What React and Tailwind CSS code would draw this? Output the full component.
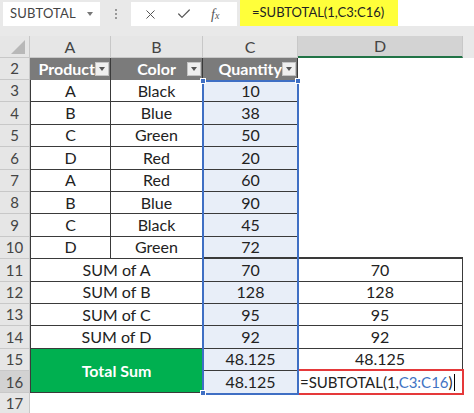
import { X, Check } from 'lucide-react'

const body = [
  ['3', 'A', 'Black', '10'],
  ['4', 'B', 'Blue', '38'],
  ['5', 'C', 'Green', '50'],
  ['6', 'D', 'Red', '20'],
  ['7', 'A', 'Red', '60'],
  ['8', 'B', 'Blue', '90'],
  ['9', 'C', 'Black', '45'],
  ['10', 'D', 'Green', '72'],
]

const sums = [
  ['11', 'SUM of A', '70'],
  ['12', 'SUM of B', '128'],
  ['13', 'SUM of C', '95'],
  ['14', 'SUM of D', '92'],
]

function RowHead({ n, active }) {
  return (
    <div className={`flex items-center justify-center border-r border-b border-[#c8c8c8] text-[15px] text-[#444] ${active ? 'bg-[#d2d2d2]' : 'bg-[#e6e6e6]'}`}>
      {n}
    </div>
  )
}

function Drop() {
  return (
    <span className="absolute right-[1px] top-[4px] w-[14px] h-[14px] bg-[#efefef] border border-[#c4c4c4] flex items-center justify-center">
      <span className="w-0 h-0 border-l-[3px] border-r-[3px] border-t-[4px] border-l-transparent border-r-transparent border-t-[#555]" />
    </span>
  )
}

export default function App() {
  return (
    <div className="w-[474px] h-[413px] overflow-hidden bg-white font-['Lato','Open_Sans',sans-serif] text-[#222] select-none">
      {/* formula bar */}
      <div className="h-[36px] bg-[#e9e9e9] flex items-start pt-[2px]">
        <div className="ml-[3px] w-[97px] h-[24px] bg-white flex items-center justify-between pl-[7px] pr-[7px]">
          <span className="text-[13px] text-[#444] tracking-[0.2px]">SUBTOTAL</span>
          <span className="w-0 h-0 border-l-[3px] border-r-[3px] border-t-[4px] border-l-transparent border-r-transparent border-t-[#777]" />
        </div>
        <div className="w-[31px] h-[24px] flex flex-col items-center justify-center gap-[2px]">
          <span className="w-[2px] h-[2px] bg-[#999]" />
          <span className="w-[2px] h-[2px] bg-[#999]" />
          <span className="w-[2px] h-[2px] bg-[#999]" />
        </div>
        <div className="w-[106px] h-[24px] bg-white flex items-center">
          <X className="ml-[12px] w-[15px] h-[15px] text-[#555]" strokeWidth={1.6} />
          <Check className="ml-[18px] w-[16px] h-[16px] text-[#555]" strokeWidth={1.8} />
          <span className="ml-[19px] text-[14px] italic font-['Liberation_Serif',serif] text-[#555]">f<span className="text-[10px]">x</span></span>
        </div>
        <div className="ml-[3px] flex-1 h-[26px] -mt-[2px] bg-white flex">
          <div className="w-[158px] h-[26px] bg-[#ffff3a] flex items-center pl-[12px] text-[13px] text-[#222]">
            =SUBTOTAL(1,C3:C16)
          </div>
        </div>
      </div>

      {/* sheet */}
      <div className="relative grid grid-cols-[30px_81px_92px_95px_165px_11px] grid-rows-[22px_22px_repeat(14,22.4px)_21px] text-[16px]">
        {/* column headers */}
        <div className="bg-[#e6e6e6] border-r border-b border-[#c8c8c8] flex items-end justify-end pr-[4px] pb-[3px]">
          <span className="w-0 h-0 border-b-[14px] border-l-[14px] border-b-[#b8b8b8] border-l-transparent" />
        </div>
        <div className="bg-[#e6e6e6] border-r border-b border-[#c8c8c8] flex items-center justify-center text-[#444]">A</div>
        <div className="bg-[#e6e6e6] border-r border-b border-[#c8c8c8] flex items-center justify-center text-[#444]">B</div>
        <div className="bg-[#e6e6e6] border-r border-b border-[#c8c8c8] flex items-center justify-center text-[#444]">C</div>
        <div className="bg-[#d3d3d3] border-r border-[#c8c8c8] border-b-2 border-b-[#217346] flex items-center justify-center text-[#444]">D</div>
        <div className="bg-[#e9e9e9]" />

        {/* row 2 */}
        <RowHead n="2" />
        <div className="relative bg-[#7b7b7b] border-r border-[#3a3a3a] flex items-center justify-end pr-[15px] text-white font-bold overflow-hidden">
          Product
          <Drop />
        </div>
        <div className="relative bg-[#7b7b7b] border-r border-[#3a3a3a] flex items-center justify-center text-white font-bold">
          Color
          <Drop />
        </div>
        <div className="relative bg-[#7b7b7b] border-r border-[#3a3a3a] flex items-center justify-end pr-[15px] text-white font-bold">
          Quantity
          <Drop />
        </div>
        <div />
        <div />

        {body.map(([n, p, c, q]) => (
          <div key={n} className="contents">
            <RowHead n={n} />
            <div className="border-l border-r border-b border-[#3a3a3a] flex items-center justify-center">{p}</div>
            <div className="border-r border-b border-[#3a3a3a] flex items-center justify-center">{c}</div>
            <div className={`bg-[#e8eef8] border-[#3a3a3a] flex items-center justify-center ${n === '10' ? 'border-b-2' : 'border-b'}`}>{q}</div>
            <div className={n === '10' ? 'border-b-2 border-[#3a3a3a]' : ''} />
            <div />
          </div>
        ))}

        {sums.map(([n, label, v]) => (
          <div key={n} className="contents">
            <RowHead n={n} />
            <div className="col-span-2 border-l border-r border-b border-[#3a3a3a] flex items-center justify-center">{label}</div>
            <div className="bg-[#e8eef8] border-b border-[#3a3a3a] flex items-center justify-center">{v}</div>
            <div className="border-r border-b border-[#3a3a3a] flex items-center justify-center">{v}</div>
            <div />
          </div>
        ))}

        {/* rows 15-16 */}
        <RowHead n="15" />
        <div className="col-span-2 row-span-2 bg-[#00b050] border-l border-r border-b border-[#3a3a3a] flex items-center justify-center text-white font-bold">
          Total Sum
        </div>
        <div className="bg-[#e8eef8] border-b border-[#3a3a3a] flex items-center justify-center">48.125</div>
        <div className="border-r border-b border-[#3a3a3a] flex items-center justify-center">48.125</div>
        <div />

        <RowHead n="16" active />
        <div className="bg-[#e8eef8] flex items-center justify-center">48.125</div>
        <div className="relative flex items-center">
          <div className="absolute -left-[1px] -top-[2px] -right-[1px] -bottom-[2px] border-2 border-[#e5393a]" />
          <span className="pl-[2px] text-[15px] whitespace-nowrap">
            =SUBTOTAL(1,<span className="text-[#3f74c4]">C3:C16</span>)
          </span>
          <span className="w-[1px] h-[17px] bg-black ml-[1px]" />
        </div>
        <div />

        <RowHead n="17" />
        <div />
        <div />
        <div />
        <div />
        <div />

        {/* selection C3:C16 */}
        <div className="absolute left-[202px] top-[44px] w-[97px] h-[315px] border-2 border-[#3f6fc4] pointer-events-none" />
        <div className="absolute left-[200px] top-[42px] w-[6px] h-[6px] bg-[#3f6fc4] border border-white" />
        <div className="absolute left-[295px] top-[42px] w-[6px] h-[6px] bg-[#3f6fc4] border border-white" />
        <div className="absolute left-[200px] top-[354px] w-[6px] h-[6px] bg-[#3f6fc4] border border-white" />
      </div>
    </div>
  )
}
